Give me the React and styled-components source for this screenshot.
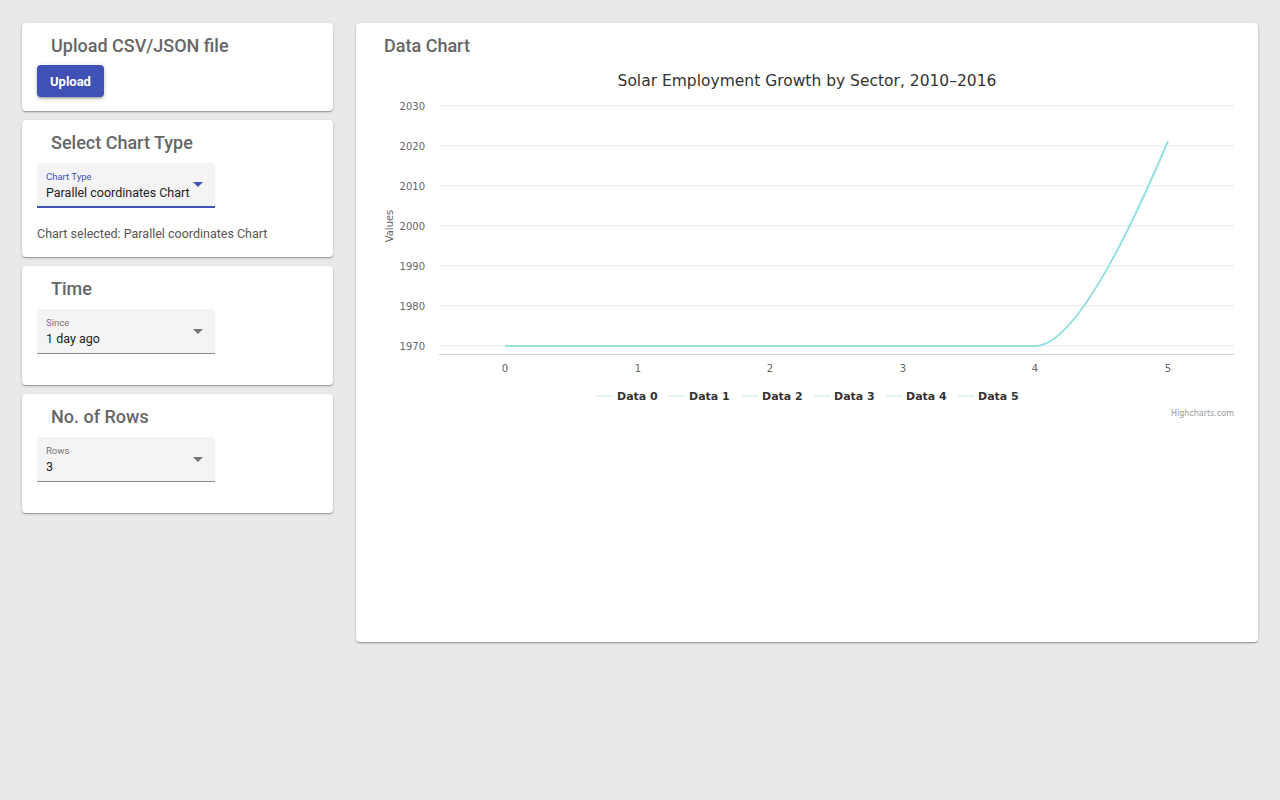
import styled, { createGlobalStyle } from "styled-components";

const GlobalStyle = createGlobalStyle`
  html, body {
    margin: 0;
    padding: 0;
    background: #e9e9e9;
    font-family: Roboto, "Liberation Sans", Arial, sans-serif;
  }
`;

const Page = styled.div`
  display: grid;
  grid-template-columns: 311px minmax(0, 1fr);
  gap: 23px;
  padding: 23px 22px;
  min-height: 800px;
  box-sizing: border-box;
  align-items: start;
`;

const Column = styled.div`
  display: flex;
  flex-direction: column;
  gap: 9px;
`;

const Card = styled.div`
  background: #fff;
  border-radius: 4px;
  box-shadow: 0 1px 3px rgba(0, 0, 0, 0.2), 0 1px 1px rgba(0, 0, 0, 0.14),
    0 2px 1px -1px rgba(0, 0, 0, 0.12);
  padding: ${(p) => p.$pad || "12px 15px 14px"};
  height: ${(p) => (p.$height ? `${p.$height}px` : "auto")};
  box-sizing: border-box;
  overflow: hidden;
`;

const Title = styled.h2`
  margin: 0 0 ${(p) => p.$gap ?? 9}px ${(p) => p.$indent ?? 14}px;
  font-size: 18px;
  line-height: 22px;
  font-weight: 500;
  color: #666;
`;

const UploadButton = styled.button`
  height: 32px;
  padding: 0 13px;
  border: none;
  border-radius: 4px;
  background: #3f51b5;
  color: #fff;
  font-family: Roboto, sans-serif;
  font-size: 13px;
  font-weight: 700;
  box-shadow: 0 1px 5px rgba(0, 0, 0, 0.2), 0 2px 2px rgba(0, 0, 0, 0.14),
    0 3px 1px -2px rgba(0, 0, 0, 0.12);
  cursor: pointer;
`;

const SelectBox = styled.div`
  position: relative;
  width: 178px;
  height: 45px;
  box-sizing: border-box;
  background: #f4f4f4;
  border-radius: 4px 4px 0 0;
  border-bottom: ${(p) => (p.$focused ? "2px solid #3f51b5" : "1px solid #8a8a8a")};
  padding: 9px 0 0 9px;
`;

const SelectLabel = styled.div`
  font-size: 9.5px;
  line-height: 10px;
  color: ${(p) => (p.$focused ? "#3f51b5" : "#777")};
`;

const SelectValue = styled.div`
  margin-top: 3px;
  font-size: 12.5px;
  line-height: 16px;
  color: #222;
`;

const Arrow = styled.span`
  position: absolute;
  right: 12px;
  top: ${(p) => (p.$focused ? 19 : 20)}px;
  width: 0;
  height: 0;
  border-left: 5px solid transparent;
  border-right: 5px solid transparent;
  border-top: 5px solid ${(p) => (p.$focused ? "#3f51b5" : "#757575")};
`;

const Caption = styled.p`
  margin: 16px 0 0;
  font-size: 12.5px;
  line-height: 20px;
  color: #555;
`;

const ChartWrap = styled.div`
  margin: 0 0 0 -8px;
`;

const Select = ({ label, value, focused }) => (
  <SelectBox $focused={focused}>
    <SelectLabel $focused={focused}>{label}</SelectLabel>
    <SelectValue>{value}</SelectValue>
    <Arrow $focused={focused} />
  </SelectBox>
);

const yTicks = [2030, 2020, 2010, 2000, 1990, 1980, 1970];
const xTicks = [505, 638, 770, 903, 1035, 1168];
const legendX = [617, 689, 762, 834, 906, 978];

const Chart = () => (
  <svg width="860" height="370" style={{ display: "block" }}>
    <g transform="translate(-376,-66)" fontFamily="'DejaVu Sans', Verdana, sans-serif">
      <text x="807" y="86" textAnchor="middle" fontSize="15.5" fill="#333">
        Solar Employment Growth by Sector, 2010–2016
      </text>
      {yTicks.map((v, i) => (
        <g key={v}>
          <line x1="439" x2="1234" y1={106 + i * 40} y2={106 + i * 40} stroke="#e6e6e6" />
          <text x="425" y={110 + i * 40} textAnchor="end" fontSize="10" fill="#666">
            {v}
          </text>
        </g>
      ))}
      <line x1="439" x2="1234" y1="354.5" y2="354.5" stroke="#ccd6eb" />
      {xTicks.map((x, i) => (
        <text key={x} x={x} y="372" textAnchor="middle" fontSize="10" fill="#666">
          {i}
        </text>
      ))}
      <text
        x="393"
        y="226"
        transform="rotate(-90 393 226)"
        textAnchor="middle"
        fontSize="10"
        fill="#666"
      >
        Values
      </text>
      <path
        d="M505 346 L1035 346 C1072 346 1122 250 1168 141"
        fill="none"
        stroke="#96e0e0"
        strokeWidth="2"
      />
      {legendX.map((x, i) => (
        <g key={x}>
          <line x1={x - 20} x2={x - 4} y1="396" y2="396" stroke="#e2f6f6" strokeWidth="2" />
          <text x={x} y="400" fontSize="11" fontWeight="bold" fill="#333">
            Data {i}
          </text>
        </g>
      ))}
      <text x="1234" y="416" textAnchor="end" fontSize="8" fill="#999">
        Highcharts.com
      </text>
    </g>
  </svg>
);

export default function App() {
  return (
    <>
      <GlobalStyle />
      <Page>
        <Column>
          <Card>
            <Title $gap={8}>Upload CSV/JSON file</Title>
            <UploadButton>Upload</UploadButton>
          </Card>
          <Card $pad="12px 15px 13px">
            <Title>Select Chart Type</Title>
            <Select label="Chart Type" value="Parallel coordinates Chart" focused />
            <Caption>Chart selected: Parallel coordinates Chart</Caption>
          </Card>
          <Card $pad="12px 15px 0" $height={119}>
            <Title>Time</Title>
            <Select label="Since" value="1 day ago" />
          </Card>
          <Card $pad="12px 15px 0" $height={119}>
            <Title>No. of Rows</Title>
            <Select label="Rows" value="3" />
          </Card>
        </Column>
        <Card $pad="12px 22px 0 28px" $height={619}>
          <Title $indent={0}>Data Chart</Title>
          <ChartWrap>
            <Chart />
          </ChartWrap>
        </Card>
      </Page>
    </>
  );
}
